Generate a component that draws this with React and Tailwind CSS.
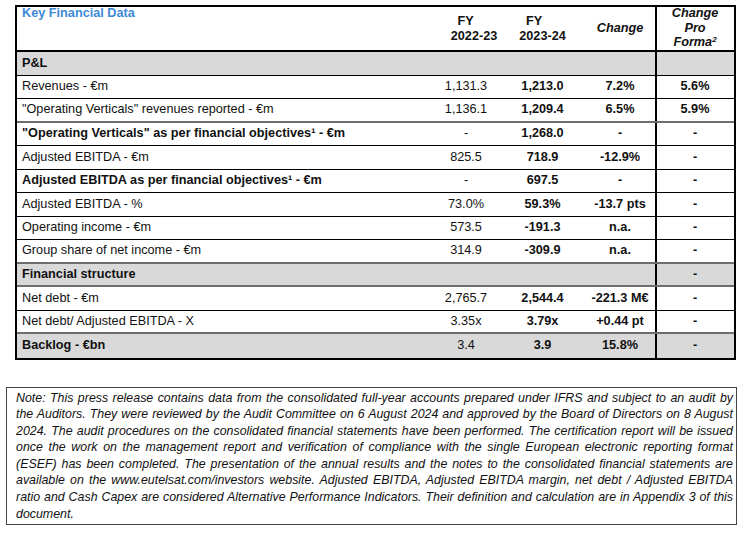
import React from "react";

const rows = [
  { label: "P&L", section: true },
  { label: "Revenues - €m", a: "1,131.3", b: "1,213.0", c: "7.2%", d: "5.6%" },
  { label: "\"Operating Verticals\" revenues reported - €m", a: "1,136.1", b: "1,209.4", c: "6.5%", d: "5.9%", thick: true },
  { label: "\"Operating Verticals\" as per financial objectives¹ - €m", bold: true, a: "-", b: "1,268.0", c: "-", d: "-" },
  { label: "Adjusted EBITDA - €m", a: "825.5", b: "718.9", c: "-12.9%", d: "-" },
  { label: "Adjusted EBITDA as per financial objectives¹ - €m", bold: true, a: "-", b: "697.5", c: "-", d: "-" },
  { label: "Adjusted EBITDA - %", a: "73.0%", b: "59.3%", c: "-13.7 pts", d: "-" },
  { label: "Operating income - €m", a: "573.5", b: "-191.3", c: "n.a.", d: "-" },
  { label: "Group share of net income - €m", a: "314.9", b: "-309.9", c: "n.a.", d: "-", thick: true },
  { label: "Financial structure", section: true, d: "-", thick: true },
  { label: "Net debt - €m", a: "2,765.7", b: "2,544.4", c: "-221.3 M€", d: "-" },
  { label: "Net debt/ Adjusted EBITDA - X", a: "3.35x", b: "3.79x", c: "+0.44 pt", d: "-", thick: true },
  { label: "Backlog - €bn", section: true, a: "3.4", b: "3.9", c: "15.8%", d: "-", last: true },
];

const noteLines = [
  "Note: This press release contains data from the consolidated full-year accounts prepared under IFRS and subject to an audit by",
  "the Auditors. They were reviewed by the Audit Committee on 6 August 2024 and approved by the Board of Directors on 8 August",
  "2024. The audit procedures on the consolidated financial statements have been performed. The certification report will be issued",
  "once the work on the management report and verification of compliance with the single European electronic reporting format",
  "(ESEF) has been completed. The presentation of the annual results and the notes to the consolidated financial statements are",
  "available on the www.eutelsat.com/investors website. Adjusted EBITDA, Adjusted EBITDA margin, net debt / Adjusted EBITDA",
  "ratio and Cash Capex are considered Alternative Performance Indicators. Their definition and calculation are in Appendix 3 of this",
];

function Row({ row }) {
  // separators: most are thin black, a few are the heavier grey ones
  let line = "border-b border-black";
  if (row.thick) line = "border-b-2 border-[#6e6e6e]";
  if (row.last) line = "";
  const bg = row.section ? "bg-[#d9d9d9]" : "bg-white";

  return (
    <div className={`grid grid-cols-[415px_68px_85px_72px_76px] h-[23.5px] items-center ${bg} ${line}`}>
      <div className={`pl-[5px] whitespace-nowrap ${row.bold || row.section ? "font-bold" : ""}`}>{row.label}</div>
      <div className="text-center">{row.a}</div>
      <div className="text-center font-bold">{row.b}</div>
      <div className="h-full flex items-center justify-center font-bold border-r-2 border-black">{row.c}</div>
      <div className="text-center font-bold">{row.d}</div>
    </div>
  );
}

export default function App() {
  return (
    <div className="w-[746px] h-[536px] bg-white text-[#111] text-[12.7px] font-['Liberation_Sans',Arial,sans-serif] overflow-hidden">
      {/* key figures table */}
      <div className="ml-[15px] mt-[5px] w-[721px] border-2 border-black">
        <div className="grid grid-cols-[415px_68px_85px_72px_76px] h-[45px] border-b-2 border-black font-bold leading-[14.5px]">
          <div className="pl-[5px] -mt-[1px] text-[#3d8ad6]">Key Financial Data</div>
          <div className="flex flex-col items-center justify-center pl-[16px]">
            <span className="pr-[17px]">FY</span>
            <span>2022-23</span>
          </div>
          <div className="flex flex-col items-center justify-center">
            <span className="pr-[17px]">FY</span>
            <span>2023-24</span>
          </div>
          <div className="flex items-center justify-center italic border-r-2 border-black">Change</div>
          <div className="flex flex-col items-center justify-center italic -mt-[1px]">
            <span>Change</span>
            <span>Pro</span>
            <span>
              Forma<sup className="text-[8px]">2</sup>
            </span>
          </div>
        </div>
        {rows.map((row, i) => (
          <Row key={i} row={row} />
        ))}
      </div>

      {/* note box */}
      <div className="ml-[6px] mt-[27px] w-[731px] h-[138px] border-[1.5px] border-[#444] pl-[9px] pr-[3px] pt-[2px] italic text-[12.4px] leading-[16.6px]">
        {noteLines.map((t, i) => (
          <div key={i} className="whitespace-nowrap text-justify [text-align-last:justify]">
            {t}
          </div>
        ))}
        <div>document.</div>
      </div>
    </div>
  );
}
